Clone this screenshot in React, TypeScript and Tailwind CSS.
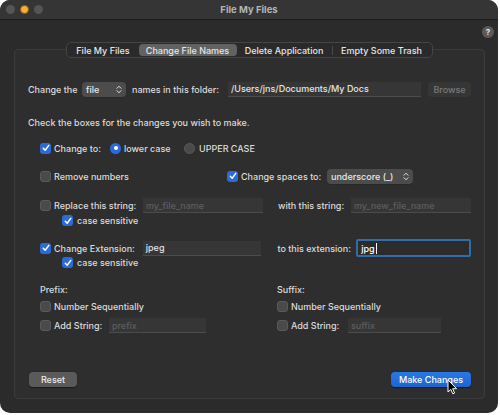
import React from 'react';

function Check({ on }: { on?: boolean }) {
  return on ? (
    <span className="flex h-[11px] w-[11px] shrink-0 items-center justify-center rounded-[3px] bg-[#2b6bd8]">
      <svg width="8" height="8" viewBox="0 0 8 8">
        <path d="M1.3 4.2 L3.2 6.2 L6.8 1.4" fill="none" stroke="#fff" strokeWidth="1.5" strokeLinecap="round" strokeLinejoin="round" />
      </svg>
    </span>
  ) : (
    <span className="h-[11px] w-[11px] shrink-0 rounded-[3px] border border-[#5a5a5a] bg-[#4a4a4a]" />
  );
}

function Radio({ on }: { on?: boolean }) {
  return on ? (
    <span className="flex h-[11px] w-[11px] shrink-0 items-center justify-center rounded-full bg-[#2b6bd8]">
      <span className="h-[4px] w-[4px] rounded-full bg-white" />
    </span>
  ) : (
    <span className="h-[11px] w-[11px] shrink-0 rounded-full border border-[#5a5a5a] bg-[#4a4a4a]" />
  );
}

function Field({ w, text, placeholder }: { w: string; text?: string; placeholder?: string }) {
  return (
    <div className={`${w} flex h-[15px] items-center border-b border-[#4c4c4c] bg-[#363636] px-[3px]`}>
      {text ? (
        <span className="text-[#e4e4e4]">{text}</span>
      ) : (
        <span className="text-[#5e5e5e]">{placeholder}</span>
      )}
    </div>
  );
}

function Popup({ w, text }: { w: string; text: string }) {
  return (
    <div className={`${w} flex h-[15px] items-center justify-between rounded-[4px] bg-[#4c4c4c] pl-[4px] pr-[4px] shadow-[0_0.5px_0_#222]`}>
      <span className="text-[#e8e8e8]">{text}</span>
      <svg width="6" height="9" viewBox="0 0 6 9">
        <path d="M1 3.3 L3 1.2 L5 3.3 M1 5.7 L3 7.8 L5 5.7" fill="none" stroke="#e0e0e0" strokeWidth="1" strokeLinecap="round" strokeLinejoin="round" />
      </svg>
    </div>
  );
}

function Label({ w, children, cls = '' }: { w?: string; children: React.ReactNode; cls?: string }) {
  return <span className={`${w ?? ''} ${cls} whitespace-nowrap`}>{children}</span>;
}

export default function App() {
  const tabs = ['File My Files', 'Change File Names', 'Delete Application', 'Empty Some Trash'];
  const widths = ['w-[71px]', 'w-[98px]', 'w-[95px]', 'w-[98px]'];

  return (
    <div className="h-[415px] w-[500px] bg-white font-['Inter','Noto_Sans',sans-serif] text-[9px] font-medium leading-none text-[#dcdcdc]">
      <div className="relative flex h-[413px] w-[498px] flex-col overflow-hidden rounded-[10px] bg-[#2b2b2b]">
        {/* title bar */}
        <div className="relative flex h-[20px] shrink-0 items-center border-b border-[#1a1a1a] bg-[#353535]">
          <div className="flex items-center gap-[5px] pl-[6px]">
            <span className="h-[9px] w-[9px] rounded-full bg-[#555555]" />
            <span className="h-[9px] w-[9px] rounded-full border border-[#8a5d12] bg-[#f6b03a]" />
            <span className="h-[9px] w-[9px] rounded-full bg-[#555555]" />
          </div>
          <span className="absolute left-0 right-0 text-center text-[9.5px] font-bold text-[#b4b4b4]">File My Files</span>
        </div>

        {/* help */}
        <div className="mt-[6px] flex justify-end pr-[4px]">
          <span className="flex h-[12px] w-[12px] items-center justify-center rounded-full bg-[#5a5a5a] text-[8px] font-bold text-[#e8e8e8]">?</span>
        </div>

        {/* tabs */}
        <div className="relative z-10 mt-[4px] flex justify-center">
          <div className="flex h-[16px] items-center rounded-[5px] border border-[#454545] bg-[#2a2a2a] p-[1px]">
            {tabs.map((t, i) => (
              <div key={t} className="flex h-full items-center">
                {i === 3 && <span className="h-[9px] w-px bg-[#4a4a4a]" />}
                <span
                  className={`${widths[i]} flex h-full items-center justify-center rounded-[4px] text-[#e6e6e6] ${i === 1 ? 'bg-[#626262]' : ''}`}
                >
                  {t}
                </span>
              </div>
            ))}
          </div>
        </div>

        {/* group box */}
        <div className="mx-[14px] -mt-[9px] flex h-[350px] w-[471px] flex-col rounded-[4px] border border-[#3c3c3c] bg-[#2e2e2e] pb-[11px] pl-[13px] pr-[13px] pt-[31px]">
          {/* folder row */}
          <div className="flex h-[16px] items-center">
            <Label w="w-[54px]">Change the</Label>
            <Popup w="w-[44px]" text="file" />
            <Label w="w-[96px]" cls="ml-[6px]">names in this folder:</Label>
            <Field w="w-[193px]" text="/Users/jns/Documents/My Docs" />
            <span className="ml-[7px] flex h-[15px] w-[43px] items-center justify-center rounded-[4px] bg-[#363636] text-[#7a7a7a]">Browse</span>
          </div>

          <div className="mt-[18px] flex h-[14px] items-center">Check the boxes for the changes you wish to make.</div>

          <div className="pl-[12px]">
            {/* change to */}
            <div className="mt-[12px] flex h-[14px] items-center">
              <Check on />
              <Label w="w-[56px]" cls="ml-[3px]">Change to:</Label>
              <Radio on />
              <Label w="w-[60px]" cls="ml-[3px]">lower case</Label>
              <Radio />
              <Label cls="ml-[4px]">UPPER CASE</Label>
            </div>

            {/* remove numbers */}
            <div className="mt-[13px] flex h-[16px] items-center">
              <Check />
              <Label w="w-[173px]" cls="ml-[3px]">Remove numbers</Label>
              <Check on />
              <Label w="w-[86px]" cls="ml-[3px]">Change spaces to:</Label>
              <Popup w="w-[86px]" text="underscore (_)" />
            </div>

            {/* replace */}
            <div className="mt-[14px] flex h-[15px] items-center">
              <Check />
              <Label w="w-[89px]" cls="ml-[3px]">Replace this string:</Label>
              <Field w="w-[120px]" placeholder="my_file_name" />
              <Label w="w-[73px]" cls="ml-[15px]">with this string:</Label>
              <Field w="w-[120px]" placeholder="my_new_file_name" />
            </div>
            <div className="mt-px flex h-[13px] items-center pl-[22px]">
              <Check on />
              <Label cls="ml-[4px]">case sensitive</Label>
            </div>

            {/* extension */}
            <div className="mt-[13px] flex h-[16px] items-center">
              <Check on />
              <Label w="w-[89px]" cls="ml-[3px]">Change Extension:</Label>
              <Field w="w-[119px]" text="jpeg" />
              <Label w="w-[79px]" cls="ml-[16px]">to this extension:</Label>
              <div className="flex h-[18px] w-[115px] items-center rounded-[2px] border-[2px] border-[#2f6ea6] bg-[#2c2c2c] px-[3px]">
                <span className="text-white">jpg</span>
                <span className="ml-px h-[11px] w-px bg-white" />
              </div>
            </div>
            <div className="flex h-[13px] items-center pl-[22px]">
              <Check on />
              <Label cls="ml-[4px]">case sensitive</Label>
            </div>

            {/* prefix / suffix */}
            <div className="mt-[14px] flex">
              <div className="w-[237px]">
                <div className="flex h-[13px] items-center">Prefix:</div>
                <div className="mt-[3px] flex h-[14px] items-center">
                  <Check />
                  <Label cls="ml-[3px]">Number Sequentially</Label>
                </div>
                <div className="mt-[5px] flex h-[15px] items-center">
                  <Check />
                  <Label w="w-[55px]" cls="ml-[3px]">Add String:</Label>
                  <Field w="w-[97px]" placeholder="prefix" />
                </div>
              </div>
              <div>
                <div className="flex h-[13px] items-center">Suffix:</div>
                <div className="mt-[3px] flex h-[14px] items-center">
                  <Check />
                  <Label cls="ml-[3px]">Number Sequentially</Label>
                </div>
                <div className="mt-[5px] flex h-[15px] items-center">
                  <Check />
                  <Label w="w-[57px]" cls="ml-[3px]">Add String:</Label>
                  <Field w="w-[93px]" placeholder="suffix" />
                </div>
              </div>
            </div>
          </div>

          <div className="flex-1" />

          {/* buttons */}
          <div className="flex h-[15px] items-center justify-between">
            <span className="ml-px flex h-[15px] w-[48px] items-center justify-center rounded-[4px] bg-[#5a5a5a] text-[#ececec] shadow-[0_0.5px_1px_#1a1a1a]">Reset</span>
            <span className="flex h-[15px] w-[80px] items-center justify-center rounded-[4px] bg-gradient-to-b from-[#2a78e4] to-[#1d64d0] text-white shadow-[0_0.5px_1px_#1a1a1a]">Make Changes</span>
          </div>
        </div>

        {/* mouse pointer */}
        <svg className="absolute left-[447px] top-[379px]" width="11" height="16" viewBox="0 0 11 16">
          <path d="M1 1 L1 13 L3.8 10.4 L5.8 14.8 L7.6 14 L5.7 9.7 L9.6 9.7 Z" fill="#000" stroke="#fff" strokeWidth="1" strokeLinejoin="round" />
        </svg>
      </div>
    </div>
  );
}
